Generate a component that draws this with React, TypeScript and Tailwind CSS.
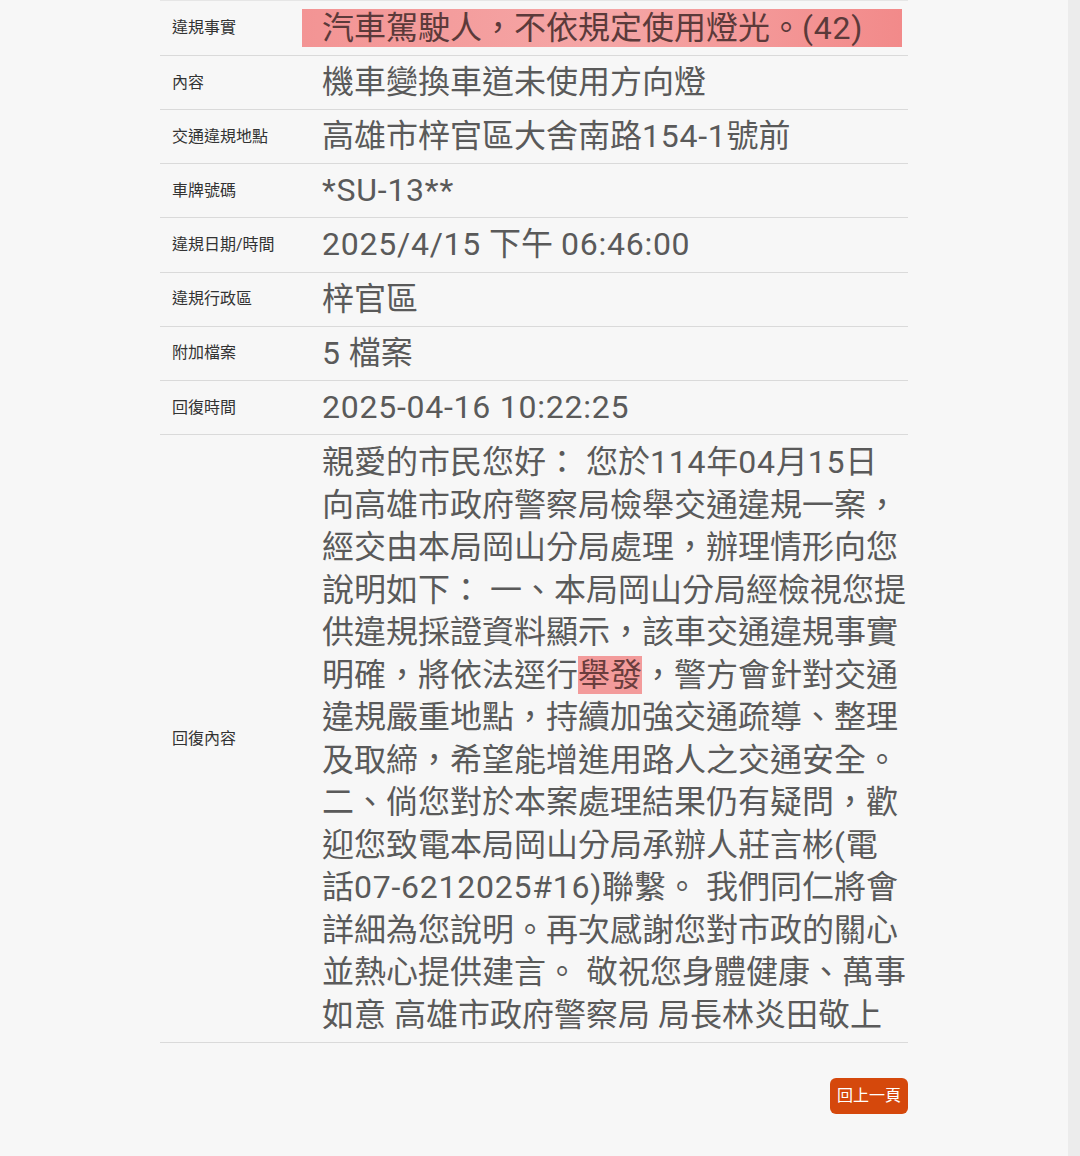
import React from "react";

const font = { fontFamily: '"Roboto", "Noto Sans CJK TC", "Noto Sans", sans-serif' };

function L(text: string): React.ReactNode {
  const parts = text.split(/([A-Za-z0-9*#()/\-:.]+(?: [A-Za-z0-9*#()/\-:.]+)*)/);
  return parts.map((p, i) =>
    i % 2 === 1 ? (
      <span key={i} className="tracking-[0.75px]">
        {p}
      </span>
    ) : (
      <React.Fragment key={i}>{p}</React.Fragment>
    )
  );
}

const rows: { label: string; value: string }[] = [
  { label: "內容", value: "機車變換車道未使用方向燈" },
  { label: "交通違規地點", value: "高雄市梓官區大舍南路154-1號前" },
  { label: "車牌號碼", value: "*SU-13**" },
  { label: "違規日期/時間", value: "2025/4/15 下午 06:46:00" },
  { label: "違規行政區", value: "梓官區" },
  { label: "附加檔案", value: "5 檔案" },
  { label: "回復時間", value: "2025-04-16 10:22:25" },
];

const reply: React.ReactNode[] = [
  L("親愛的市民您好： 您於114年04月15日"),
  "向高雄市政府警察局檢舉交通違規一案，",
  "經交由本局岡山分局處理，辦理情形向您",
  "說明如下： 一、本局岡山分局經檢視您提",
  "供違規採證資料顯示，該車交通違規事實",
  <>
    明確，將依法逕行
    <span className="bg-[#f39b9b] text-[#6a3d3d]">舉發</span>
    ，警方會針對交通
  </>,
  "違規嚴重地點，持續加強交通疏導、整理",
  "及取締，希望能增進用路人之交通安全。",
  "二、倘您對於本案處理結果仍有疑問，歡",
  L("迎您致電本局岡山分局承辦人莊言彬(電"),
  L("話07-6212025#16)聯繫。 我們同仁將會"),
  "詳細為您說明。再次感謝您對市政的關心",
  "並熱心提供建言。 敬祝您身體健康、萬事",
  "如意 高雄市政府警察局 局長林炎田敬上",
];

function Label({ children }: { children: React.ReactNode }) {
  return (
    <div className="w-[150px] shrink-0 flex items-center pl-3 text-[16px] text-[#333] border-b border-[#dadada]">
      {children}
    </div>
  );
}

export default function App() {
  return (
    <div className="flex min-h-[1156px] w-[1080px] bg-[#f7f7f7]" style={font}>
      <div className="flex-1">
        <div className="ml-[160px] w-[748px] border-t border-[#e6e6e6]">
          <div className="flex">
            <Label>違規事實</Label>
            <div className="flex-1 border-b border-[#dadada] py-[8px]">
              <div className="-ml-[8px] w-[600px] h-[38px] flex items-center pl-[20px] text-[32px] leading-[38px] text-[#5b3a3a] whitespace-nowrap bg-linear-to-r from-[#f39494] via-[#f5a6a6] to-[#f28a8a]">
                {L("汽車駕駛人，不依規定使用燈光。(42)")}
              </div>
            </div>
          </div>
          {rows.map((r) => (
            <div className="flex" key={r.label}>
              <Label>{r.label}</Label>
              <div className="flex-1 border-b border-[#dadada] pl-3 py-[6px] text-[32px] leading-[41.15px] text-[#5a5a5a] whitespace-nowrap">
                {L(r.value)}
              </div>
            </div>
          ))}
          <div className="flex">
            <Label>回復內容</Label>
            <div className="flex-1 border-b border-[#dadada] pl-3 py-[6px] text-[32px] leading-[42.5px] text-[#5a5a5a] whitespace-nowrap">
              {reply.map((l, i) => (
                <div key={i}>{l}</div>
              ))}
            </div>
          </div>
          <div className="flex justify-end mt-[35px]">
            <button className="bg-[#d5480c] text-white text-[16px] leading-[20px] px-[7px] py-[8px] rounded-[6px]">
              回上一頁
            </button>
          </div>
        </div>
      </div>
      <div className="w-[12px] bg-[#ececec]" />
    </div>
  );
}
